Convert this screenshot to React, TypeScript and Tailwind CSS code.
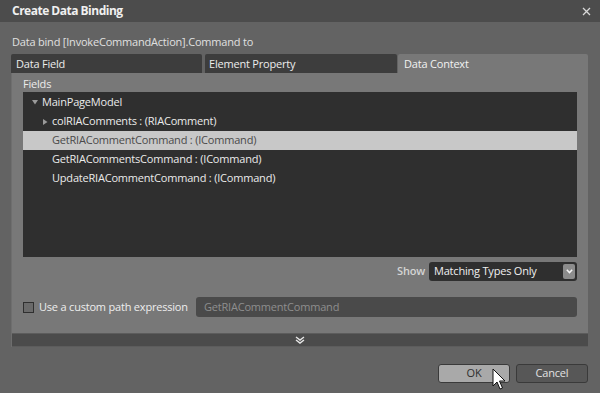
import React from "react";

const rows = [
  { label: "MainPageModel", indent: 0, arrow: "down" },
  { label: "colRIAComments : (RIAComment)", indent: 1, arrow: "right" },
  { label: "GetRIACommentCommand : (ICommand)", indent: 1, selected: true },
  { label: "GetRIACommentsCommand : (ICommand)", indent: 1 },
  { label: "UpdateRIACommentCommand : (ICommand)", indent: 1 },
];

const TreeRow = ({ label, indent, arrow, selected }: { label: string; indent: number; arrow?: string; selected?: boolean }) => (
  <div
    className={
      "h-[19px] flex items-center " +
      (selected ? "bg-[#c8c8c8] text-[#4a4a4a]" : "text-[#ebebeb]")
    }
  >
    <div className={indent === 0 ? "w-[19px] flex justify-end pr-[4px]" : "w-[29px] flex justify-end pr-[4px]"}>
      {arrow === "down" && (
        <svg width="6" height="5" viewBox="0 0 6 5">
          <path d="M0 0 L6 0 L3 4.5 Z" fill="#9a9a9a" />
        </svg>
      )}
      {arrow === "right" && (
        <svg width="5" height="6" viewBox="0 0 5 6">
          <path d="M0 0 L4.5 3 L0 6 Z" fill="#9a9a9a" />
        </svg>
      )}
    </div>
    <span>{label}</span>
  </div>
);

export default function App() {
  return (
    <div className="w-[600px] h-[393px] bg-[#636363] flex flex-col relative overflow-hidden font-['Open_Sans',sans-serif] text-[11px] tracking-[-0.2px]">
      {/* title bar */}
      <div className="h-[22px] bg-[#4c4c4c] flex items-center justify-between pl-[12px] pr-[9px]">
        <span className="font-bold text-[12px] text-[#f0f0f0] tracking-[-0.5px]">Create Data Binding</span>
        <svg width="9" height="9" viewBox="0 0 9 9">
          <path d="M1 1 L8 8 M8 1 L1 8" stroke="#d8d8d8" strokeWidth="1.3" />
        </svg>
      </div>

      <div className="pl-[11px] pr-[12px] flex flex-col">
        <div className="mt-[11px] h-[18px] leading-[18px] pl-[1px] text-[#e0e0e0]">
          Data bind [InvokeCommandAction].Command to
        </div>

        {/* tabs */}
        <div className="mt-[3px] h-[19px] flex">
          <div className="w-[191px] bg-[#3d3d3d] text-[#ececec] pl-[5px] leading-[19px] rounded-t-[2px]">Data Field</div>
          <div className="ml-[3px] w-[192px] bg-[#3d3d3d] text-[#ececec] pl-[4px] leading-[19px] rounded-t-[2px]">Element Property</div>
          <div className="ml-[1px] flex-1 bg-[#787878] text-[#f2f2f2] pl-[6px] leading-[19px] rounded-t-[2px]">Data Context</div>
        </div>

        {/* panel */}
        <div className="h-[274px] bg-[#787878] flex flex-col border-l border-[#6e6e6e]">
          <div className="px-[11px] flex flex-col">
            <div className="h-[19px] pt-[3px] leading-[16px] text-[#ececec]">Fields</div>
            <div className="h-[165px] bg-[#2f2f2f] flex flex-col pt-[1px]">
              {rows.map((r) => (
                <TreeRow key={r.label} {...r} />
              ))}
            </div>

            <div className="mt-[5px] h-[19px] flex justify-end items-center">
              <span className="text-[#d4d4d4] font-semibold mr-[4px]">Show</span>
              <div className="w-[148px] h-[19px] bg-[#2f2f2f] rounded-[3px] flex items-center justify-between pl-[5px] pr-[2px]">
                <span className="text-[#f0f0f0]">Matching Types Only</span>
                <div className="w-[12px] h-[15px] bg-[#8c8c8c] rounded-[2px] flex items-center justify-center">
                  <svg width="7" height="5" viewBox="0 0 7 5">
                    <path d="M0.8 0.8 L3.5 3.6 L6.2 0.8" stroke="#f4f4f4" strokeWidth="1.5" fill="none" />
                  </svg>
                </div>
              </div>
            </div>

            <div className="mt-[16px] h-[20px] flex items-center">
              <div className="w-[11px] h-[11px] border border-[#2f2f2f] bg-[#6a6a6a]" />
              <span className="ml-[5px] text-[#eeeeee] w-[157px]">Use a custom path expression</span>
              <div className="flex-1 h-[20px] bg-[#4a4a4a] rounded-[3px] flex items-center pl-[8px] text-[#8e8e8e]">
                GetRIACommentCommand
              </div>
            </div>
          </div>

          <div className="mt-[16px] h-[14px] bg-[#4b4b4b] border-y border-[#5c5c5c] flex items-center justify-center">
            <svg width="10" height="8" viewBox="0 0 10 8">
              <path d="M1 1 L5 4 L9 1 M1 4 L5 7 L9 4" stroke="#e6e6e6" strokeWidth="1.4" fill="none" />
            </svg>
          </div>
        </div>

        {/* buttons */}
        <div className="mt-[17px] h-[19px] flex justify-end gap-[6px]">
          <div className="w-[72px] h-[19px] rounded-[3px] bg-[#a9a9a9] border border-[#3a3a3a] flex items-center justify-center text-[#2e2e2e]">
            OK
          </div>
          <div className="w-[72px] h-[19px] rounded-[3px] bg-[#575757] border border-[#3a3a3a] flex items-center justify-center text-[#e2e2e2]">
            Cancel
          </div>
        </div>
      </div>

      {/* mouse cursor */}
      <svg className="absolute left-[492px] top-[368px]" width="14" height="24" viewBox="0 0 14 24">
        <path
          d="M1 1 L1 18 L5 14 L8 21 L10.5 20 L7.5 13 L13 13 Z"
          fill="#ffffff"
          stroke="#111111"
          strokeWidth="1"
          strokeLinejoin="round"
        />
      </svg>
    </div>
  );
}
